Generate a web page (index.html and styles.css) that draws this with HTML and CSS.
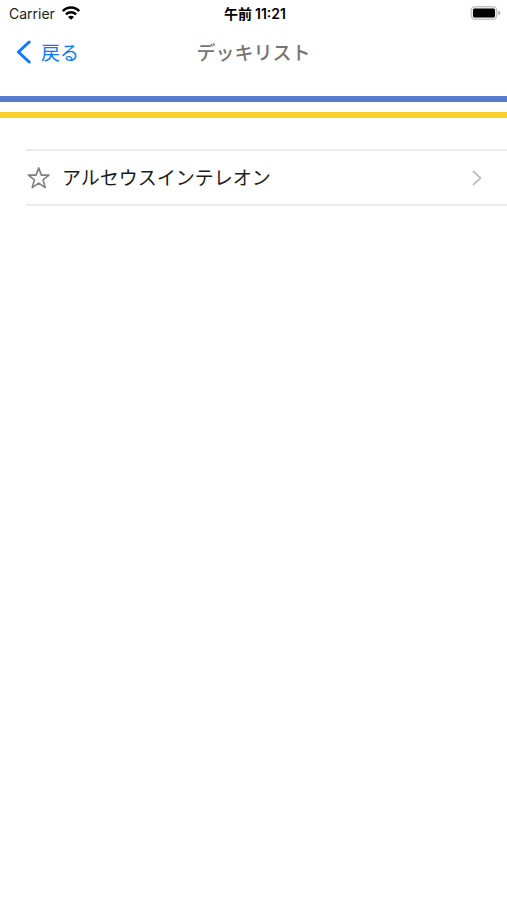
FILE: index.html
```html
<!DOCTYPE html>
<html lang="ja">
<head>
<meta charset="utf-8">
<meta name="viewport" content="width=device-width, initial-scale=1">
<title>デッキリスト</title>
<link rel="stylesheet" href="styles.css">
</head>
<body>
<div class="status">
  <div class="carrier">
    <span>Carrier</span>
    <svg class="wifi" width="20" height="14" viewBox="0 0 20 14" aria-hidden="true">
      <path d="M1.8 5.2C6.4 .4 13.6 .4 18.2 5.2M4.9 8.4C7.8 5.6 12.2 5.6 15.1 8.4" fill="none" stroke="#000" stroke-width="2.5"/>
      <path d="M10 13.8 7 10.9C8.8 9.3 11.2 9.3 13 10.9Z" fill="#000"/>
    </svg>
  </div>
  <time class="time"><span>午前</span><span>11:21</span></time>
  <svg class="battery" width="31" height="14" viewBox="0 0 31 14" aria-hidden="true">
    <rect x="1.2" y=".7" width="25.6" height="12.6" rx="3.8" fill="#eee" stroke="#c4c4c4" stroke-width="1.3"/>
    <rect x="3" y="2.5" width="22" height="9" rx="1.5" fill="#000"/>
    <path d="M28.3 4.8C30.9 5.4 30.9 8.6 28.3 9.2Z" fill="#ababab"/>
  </svg>
</div>
<header class="nav">
  <a class="back" href="#">
    <svg width="16" height="24" viewBox="0 0 16 24" aria-hidden="true">
      <path d="M13.2 2 2.4 12 13.2 22" fill="none" stroke="currentColor" stroke-width="3" stroke-linecap="round" stroke-linejoin="round"/>
    </svg>
    <span class="label">戻る</span>
  </a>
  <h1 class="title label">デッキリスト</h1>
</header>
<div class="stripes"></div>
<main>
  <ul class="decks">
    <li class="deck">
      <button class="star" type="button" aria-label="お気に入り">
        <svg width="24" height="24" viewBox="0 0 24 24" aria-hidden="true">
          <path d="M12.7 1.9 15.4 9.1H23L17 13.8 19.2 21.6 12.7 17.1 6.2 21.6 8.4 13.8 2.4 9.1H10Z" fill="none" stroke="#808080" stroke-width="1.6" stroke-linejoin="round"/>
        </svg>
      </button>
      <a class="link" href="#">
        <span class="label">アルセウスインテレオン</span>
        <svg width="12" height="18" viewBox="0 0 12 18" aria-hidden="true">
          <path d="M2.5 2.5 9.5 9 2.5 15.5" fill="none" stroke="#c2c2c4" stroke-width="2" stroke-linecap="round" stroke-linejoin="round"/>
        </svg>
      </a>
    </li>
  </ul>
</main>
</body>
</html>
```

FILE: styles.css
```css
* {
  box-sizing: border-box;
}

body {
  margin: 0;
  background: #fff;
  color: #1c1c1c;
  font-family: Inter, "Noto Sans CJK JP", sans-serif;
}

svg {
  display: block;
  flex: none;
}

a {
  color: inherit;
  text-decoration: none;
}

.status,
.nav {
  display: grid;
  grid-template-columns: 1fr auto 1fr;
  align-items: center;
}

.status {
  height: 26px;
  padding: 0 6px 0 9px;
  font-size: 14px;
  line-height: 20px;
}

.carrier {
  display: flex;
  align-items: center;
  gap: 6px;
}

.carrier span,
.time {
  padding-top: 2px;
}

.time {
  display: flex;
  gap: 3px;
  color: #000;
  font-weight: 600;
}

.battery {
  justify-self: end;
}

.nav {
  height: 52px;
  padding: 0 16px;
  font-size: 19px;
  line-height: 28px;
}

.label {
  padding-top: 3px;
}

.back {
  display: flex;
  align-items: center;
  gap: 9px;
  color: #0a7aff;
}

.title {
  margin: 0;
  color: #757575;
  font-size: 19px;
  font-weight: 500;
}

.stripes {
  height: 22px;
  margin-top: 18px;
  border-top: 6px solid #587dd0;
  border-bottom: 6px solid #f8cf2d;
}

.decks {
  margin: 31px 0 0 26px;
  padding: 0;
  border-top: 2px solid #ececec;
  list-style: none;
}

.deck {
  display: flex;
  align-items: center;
  gap: 12px;
  height: 55px;
  border-bottom: 2px solid #ececec;
}

.star {
  padding: 0;
  border: 0;
  background: none;
}

.link {
  display: flex;
  flex: 1;
  align-items: center;
  justify-content: space-between;
  padding-right: 24px;
  font-size: 19px;
  line-height: 28px;
}
```
